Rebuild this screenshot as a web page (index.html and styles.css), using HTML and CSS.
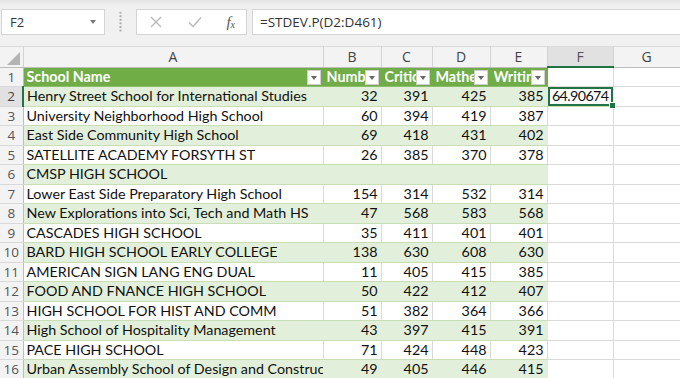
FILE: index.html
```html
<!DOCTYPE html>
<html lang="en">
<head>
    <meta charset="UTF-8">
    <title>Excel - STDEV.P</title>
    <link rel="stylesheet" href="styles.css">
</head>
<body>
    <div class="formula-bar">
        <div class="name-box">
            <span>F2</span>
            <span class="caret"></span>
        </div>
        <div class="grip"></div>
        <div class="fx-buttons">
            <svg width="14" height="14" viewBox="0 0 14 14"><path d="M2 2 L12 12 M12 2 L2 12" stroke="#b8b8b8" stroke-width="1.4" fill="none"/></svg>
            <svg width="16" height="14" viewBox="0 0 16 14"><path d="M2 7.5 L6 11.5 L14 2.5" stroke="#b8b8b8" stroke-width="1.4" fill="none"/></svg>
            <span class="fx">f<sub>x</sub></span>
        </div>
        <div class="formula-input">=STDEV.P(D2:D461)</div>
    </div>

    <table class="sheet">
        <colgroup>
            <col style="width: 23px">
            <col style="width: 300px">
            <col style="width: 58px">
            <col style="width: 51px">
            <col style="width: 58px">
            <col style="width: 57px">
            <col style="width: 66px">
            <col style="width: 67px">
        </colgroup>
        <thead>
            <tr>
                <th class="corner"><span class="corner-tri"></span></th>
                <th>A</th>
                <th>B</th>
                <th>C</th>
                <th>D</th>
                <th>E</th>
                <th class="active-col">F</th>
                <th>G</th>
            </tr>
        </thead>
        <tbody id="rows">
            <tr class="table-head">
                <td class="rownum">1</td>
                <td class="th"><span class="label">School Name</span><span class="filter"></span></td>
                <td class="th"><span class="label">Number</span><span class="filter"></span></td>
                <td class="th"><span class="label">Critical</span><span class="filter"></span></td>
                <td class="th"><span class="label">Mathematics</span><span class="filter"></span></td>
                <td class="th"><span class="label">Writing</span><span class="filter"></span></td>
                <td class="free"></td>
                <td class="free"></td>
            </tr>
        </tbody>
    </table>

    <script>
        // rows 2..16 of the sheet
        const data = [
            ['Henry Street School for International Studies', 32, 391, 425, 385],
            ['University Neighborhood High School', 60, 394, 419, 387],
            ['East Side Community High School', 69, 418, 431, 402],
            ['SATELLITE ACADEMY FORSYTH ST', 26, 385, 370, 378],
            ['CMSP HIGH SCHOOL', '', '', '', ''],
            ['Lower East Side Preparatory High School', 154, 314, 532, 314],
            ['New Explorations into Sci, Tech and Math HS', 47, 568, 583, 568],
            ['CASCADES HIGH SCHOOL', 35, 411, 401, 401],
            ['BARD HIGH SCHOOL EARLY COLLEGE', 138, 630, 608, 630],
            ['AMERICAN SIGN LANG ENG DUAL', 11, 405, 415, 385],
            ['FOOD AND FNANCE HIGH SCHOOL', 50, 422, 412, 407],
            ['HIGH SCHOOL FOR HIST AND COMM', 51, 382, 364, 366],
            ['High School of Hospitality Management', 43, 397, 415, 391],
            ['PACE HIGH SCHOOL', 71, 424, 448, 423],
            ['Urban Assembly School of Design and Construction', 49, 405, 446, 415]
        ];

        const tbody = document.getElementById('rows');
        data.forEach((row, i) => {
            const n = i + 2;
            const tr = document.createElement('tr');
            tr.className = n % 2 === 0 ? 'band' : 'plain';
            let html = '<td class="rownum' + (n === 2 ? ' active-row' : '') + '">' + n + '</td>';
            html += '<td class="txt">' + row[0] + '</td>';
            for (let c = 1; c < 5; c++) {
                html += '<td class="num">' + row[c] + '</td>';
            }
            html += n === 2 ? '<td class="free num selected">64.90674</td>' : '<td class="free"></td>';
            html += '<td class="free"></td>';
            tr.innerHTML = html;
            tbody.appendChild(tr);
        });
    </script>
</body>
</html>
```

FILE: styles.css
```css
body {
    margin: 0;
    background: #fff;
    font-family: Lato, "Liberation Sans", sans-serif;
    width: 680px;
    height: 378px;
    overflow: hidden;
}
.formula-bar {
    display: flex;
    align-items: stretch;
    height: 26px;
    padding: 9px 0 11px 1px;
    background: linear-gradient(#e4e4e4 0, #f0f0f0 6px, #f1f1f1 100%);
    font-family: "Open Sans", "Noto Sans", sans-serif;
    font-size: 13px;
    color: #333;
}
.name-box {
    width: 104px;
    background: #fff;
    border: 1px solid #d5d5d5;
    display: flex;
    align-items: center;
    justify-content: space-between;
    padding: 0 8px 0 8px;
    box-sizing: border-box;
}
.caret {
    width: 0;
    height: 0;
    border-left: 3.5px solid transparent;
    border-right: 3.5px solid transparent;
    border-top: 4px solid #777;
}
.grip {
    width: 31px;
    background: radial-gradient(circle, #a8a8a8 0.9px, transparent 1.3px) center 6px / 3px 3.6px repeat-y;
    margin: 3px 0;
}
.fx-buttons {
    width: 111px;
    background: #fff;
    border: 1px solid #d5d5d5;
    box-sizing: border-box;
    display: flex;
    align-items: center;
    justify-content: space-between;
    padding: 0 11px 0 12px;
}
.fx {
    font-family: "Liberation Serif", serif;
    font-style: italic;
    font-size: 15px;
    color: #555;
}
.fx sub {
    font-size: 10px;
    vertical-align: -1px;
}
.formula-input {
    flex: 1;
    margin-left: 5px;
    background: #fff;
    border: 1px solid #d5d5d5;
    border-right: none;
    display: flex;
    align-items: center;
    padding-left: 7px;
    font-size: 13.5px;
}
.sheet {
    border-collapse: collapse;
    table-layout: fixed;
    width: 680px;
    font-size: 14.3px;
    color: #111;
}
.sheet thead th {
    height: 19px;
    padding: 0;
    background: #f3f3f3;
    border-right: 1px solid #d3d3d3;
    border-bottom: 1px solid #bdbdbd;
    border-top: 1px solid #dadada;
    font-weight: normal;
    font-size: 14px;
    color: #444;
    font-family: "Open Sans", "Noto Sans", sans-serif;
}
.sheet thead th.active-col {
    background: #e1e1e1;
    border-bottom: 2px solid #217346;
    color: #555;
}
.corner {
    position: relative;
}
.corner-tri {
    position: absolute;
    right: 3px;
    bottom: 2px;
    width: 0;
    height: 0;
    border-left: 13px solid transparent;
    border-bottom: 13px solid #b4b4b4;
}
.sheet td {
    height: 19.5px;
    padding: 0 3px;
    white-space: nowrap;
    overflow: hidden;
    box-sizing: border-box;
    border-right: 1px solid #dadada;
    border-bottom: 1px solid #dadada;
    line-height: 18px;
}
.sheet td.rownum {
    background: #f3f3f3;
    color: #555;
    text-align: center;
    padding: 0;
    border-right: 1px solid #bdbdbd;
    border-bottom: 1px solid #d9d9d9;
    font-family: "Open Sans", "Noto Sans", sans-serif;
    font-size: 13.5px;
}
.sheet td.active-row {
    background: #e1e1e1;
    border-right: 2px solid #217346;
    color: #444;
}
.table-head td.th {
    background: #70ad47;
    color: #fff;
    font-weight: bold;
    padding: 0 1px 0 3px;
    border-right: 1px solid #70ad47;
    border-bottom: 1px solid #8cbd6b;
}
.th {
    position: relative;
}
.th .label {
    display: block;
    overflow: hidden;
    margin-right: 15px;
}
.filter {
    position: absolute;
    right: 2px;
    top: 2px;
    width: 14px;
    height: 15px;
    background: #fff;
    border: 1px solid #d0d0d0;
    box-sizing: border-box;
}
.filter::after {
    content: "";
    position: absolute;
    left: 3px;
    top: 5px;
    border-left: 3.5px solid transparent;
    border-right: 3.5px solid transparent;
    border-top: 4px solid #666;
}
.band td.txt,
.band td.num {
    background: #e2efda;
    border-right-color: #e2efda;
    border-bottom: 1px solid #c7deb6;
}
.plain td.txt,
.plain td.num {
    border-bottom: 1px solid #c7deb6;
}
.num {
    text-align: right;
}
.sheet td.free {
    background: #fff;
}
.sheet td.selected {
    position: relative;
    overflow: visible;
    box-shadow: inset 0 0 0 2px #217346;
    padding: 0 4px 0 2px;
    letter-spacing: -0.6px;
}
.sheet td.selected::after {
    content: "";
    position: absolute;
    right: -3px;
    bottom: -3px;
    width: 5px;
    height: 5px;
    background: #217346;
    border: 1px solid #fff;
}
```
